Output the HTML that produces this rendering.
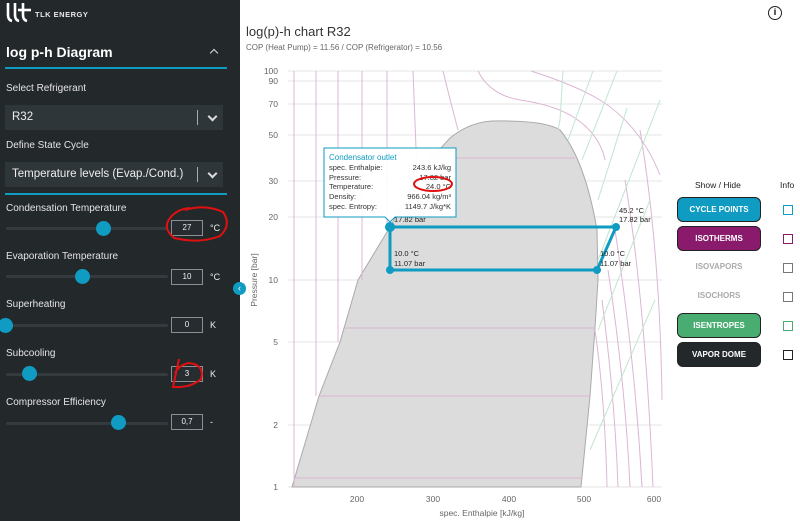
<!DOCTYPE html>
<html><head><meta charset="utf-8"><style>
*{margin:0;padding:0;box-sizing:border-box}
body{width:800px;height:521px;overflow:hidden;font-family:"Liberation Sans",sans-serif;background:#fff;position:relative}
#sb{position:absolute;left:0;top:0;width:240px;height:521px;background:#23282b;color:#e8e8e8}
.lbl{position:absolute;left:6px;font-size:10px;color:#e4e4e4}
.sel{position:absolute;left:5px;width:218px;height:25px;background:#2f3639;font-size:11.5px;color:#eee;padding:6px 7px}
.sel .bar{position:absolute;right:25px;top:5px;width:1px;height:15px;background:#aaa}
.sel .chev{position:absolute;right:7px;top:8px;width:7px;height:7px;border-right:2px solid #ddd;border-bottom:2px solid #ddd;transform:rotate(45deg)}
.track{position:absolute;left:6px;width:162px;height:3px;background:#333b3f;border-radius:2px}
.knob{position:absolute;width:15px;height:15px;border-radius:50%;background:#0f9bc2}
.box{position:absolute;left:171px;width:32px;height:16px;border:1px solid #8a9194;background:#262c2f;color:#eee;font-size:8px;text-align:center;line-height:14px}
.unit{position:absolute;left:210px;font-size:9px;color:#eee}
.btn{position:absolute;left:677px;width:84px;height:25px;border-radius:6px;font-size:8px;font-weight:bold;color:#fff;text-align:center;line-height:24px;border:1px solid #222}
.cb{position:absolute;left:783px;width:10px;height:10px;border:1.3px solid #777}
</style></head><body>
<div id="sb">
 <svg style="position:absolute;left:5px;top:1px" width="28" height="22" viewBox="0 0 28 22"><g fill="none" stroke="#fff" stroke-width="2.6"><path d="M3 2V14Q3 19 7 20"/><path d="M10 2V14Q10 19 14 20"/><path d="M18 2V14Q18 19 22 20"/><path d="M13 9H26"/></g></svg>
 <div style="position:absolute;left:35px;top:10px;font-size:7.5px;font-weight:bold;letter-spacing:.5px">TLK ENERGY</div>
 <div style="position:absolute;left:6px;top:44px;font-size:14px;font-weight:bold;color:#fff">log p-h Diagram</div>
 <div style="position:absolute;left:211px;top:50px;width:6px;height:6px;border-left:1.5px solid #ddd;border-top:1.5px solid #ddd;transform:rotate(45deg)"></div>
 <div style="position:absolute;left:5px;top:67px;width:222px;height:2px;background:#0f9bc2"></div>
 <div class="lbl" style="top:83px">Select Refrigerant</div>
 <div class="sel" style="top:105px">R32<div class="bar"></div><div class="chev"></div></div>
 <div class="lbl" style="top:140px">Define State Cycle</div>
 <div class="sel" style="top:162px">Temperature levels (Evap./Cond.)<div class="bar"></div><div class="chev"></div></div>
 <div style="position:absolute;left:5px;top:193px;width:222px;height:2px;background:#0f9bc2"></div>
 <div class="lbl" style="top:203px">Condensation Temperature</div>
 <div class="track" style="top:227px"></div><div class="knob" style="left:96px;top:221px"></div>
 <div class="box" style="top:220px">27</div><div class="unit" style="top:223px">°C</div>
 <div class="lbl" style="top:251px">Evaporation Temperature</div>
 <div class="track" style="top:275px"></div><div class="knob" style="left:75px;top:269px"></div>
 <div class="box" style="top:269px">10</div><div class="unit" style="top:272px">°C</div>
 <div class="lbl" style="top:299px">Superheating</div>
 <div class="track" style="top:324px"></div><div class="knob" style="left:-2px;top:318px"></div>
 <div class="box" style="top:317px">0</div><div class="unit" style="top:320px">K</div>
 <div class="lbl" style="top:348px">Subcooling</div>
 <div class="track" style="top:373px"></div><div class="knob" style="left:22px;top:366px"></div>
 <div class="box" style="top:366px">3</div><div class="unit" style="top:369px">K</div>
 <div class="lbl" style="top:397px">Compressor Efficiency</div>
 <div class="track" style="top:422px"></div><div class="knob" style="left:111px;top:415px"></div>
 <div class="box" style="top:414px">0,7</div><div class="unit" style="top:417px">-</div>
 <svg style="position:absolute;left:160px;top:200px" width="70" height="45"><path d="M25 10Q45 4 63 12Q72 25 60 36Q40 44 14 38Q2 28 10 18Q17 9 30 8" fill="none" stroke="#e01010" stroke-width="2"/></svg>
 <svg style="position:absolute;left:165px;top:355px" width="45" height="35"><path d="M14 4L8 32Q26 33 36 24Q40 10 24 8Q14 10 10 18" fill="none" stroke="#e01010" stroke-width="2"/></svg>
</div>
<div style="position:absolute;left:233px;top:282px;width:13px;height:13px;border-radius:50%;background:#0f9bc2;color:#fff;font-size:9px;line-height:12px;text-align:center">‹</div>
<div style="position:absolute;left:768px;top:6px;width:14px;height:14px;border:1.5px solid #222;border-radius:50%;font-size:9px;text-align:center;line-height:11px;font-weight:bold">i</div>
<div style="position:absolute;left:246px;top:24px;font-size:13px;color:#333">log(p)-h chart R32</div>
<div style="position:absolute;left:246px;top:43px;font-size:8px;color:#666">COP (Heat Pump) = 11.56 / COP (Refrigerator) = 10.56</div>
<svg style="position:absolute;left:240px;top:0" width="430" height="521" font-family="Liberation Sans" font-size="9" fill="#666">
<g transform="translate(-240,0)">
<g stroke="#e6e6e6" stroke-width="1">
<line x1="288" y1="71" x2="662" y2="71"/><line x1="288" y1="81" x2="662" y2="81"/><line x1="288" y1="104" x2="662" y2="104"/><line x1="288" y1="135" x2="662" y2="135"/><line x1="288" y1="181" x2="662" y2="181"/><line x1="288" y1="217" x2="662" y2="217"/><line x1="288" y1="280" x2="662" y2="280"/><line x1="288" y1="342" x2="662" y2="342"/><line x1="288" y1="425" x2="662" y2="425"/><line x1="288" y1="487" x2="662" y2="487"/>
</g>
<g font-size="8.5" text-anchor="end"><text x="278" y="74">100</text><text x="278" y="84">90</text><text x="278" y="107">70</text><text x="278" y="138">50</text><text x="278" y="184">30</text><text x="278" y="220">20</text><text x="278" y="283">10</text><text x="278" y="345">5</text><text x="278" y="428">2</text><text x="278" y="490">1</text></g>
<g font-size="8.5" text-anchor="middle"><text x="357" y="502">200</text><text x="433" y="502">300</text><text x="509" y="502">400</text><text x="584" y="502">500</text><text x="654" y="502">600</text></g>
<text x="482" y="516" text-anchor="middle" font-size="8.5">spec. Enthalpie [kJ/kg]</text>
<text transform="translate(257,280) rotate(-90)" text-anchor="middle" font-size="8.5">Pressure [bar]</text>
<path d="M292 487L319 396L340 342L358 280L390 227L405 200L430 160L450 138Q470 122 492 121Q545 120 560 130Q585 160 597 230L598 280L595 328L590 396L581 487Z" fill="#dcdcdc" stroke="#aaa" stroke-width="1"/>
<g stroke="#dcb6d4" stroke-width="1" fill="none">
<path d="M294 71V487M316 71V396M338 71V342M362 71V280M387 71V227M413 71L418 200"/>
<path d="M294 478H581M319 396H590M345 328H595M390 227H600M430 158H575"/>
<path d="M443 71Q450 100 458 130"/>
<path d="M478 71Q490 95 520 100Q555 105 575 118Q600 135 605 160"/>
<path d="M531 71Q575 85 600 100Q640 125 660 175"/>
<path d="M595 330Q605 400 607 487M602 300Q615 400 618 487M608 270Q625 380 630 487M615 230Q635 360 642 487M625 180Q645 300 653 487M640 130Q660 250 662 400"/>
</g>
<g stroke="#bfe6cf" stroke-width="1" fill="none">
<path d="M560 130L560 130M558 130L560 120L563 71M568 140L593 71M582 160L617 71M598 200L627 108M598 260L660 100M598 330L650 200M590 450L655 300"/>
</g>
<g stroke="#0f9bc2" stroke-width="3" fill="none"><path d="M390 227H616L597 270H390Z"/></g>
<g fill="#0f9bc2"><circle cx="390" cy="227" r="5"/><circle cx="616" cy="227" r="4"/><circle cx="597" cy="270" r="4"/><circle cx="390" cy="270" r="4"/></g>
<g font-size="7.5" fill="#222"><text x="394" y="222">17.82 bar</text><text x="619" y="213">45.2 °C</text><text x="619" y="222">17.82 bar</text><text x="394" y="256">10.0 °C</text><text x="394" y="266">11.07 bar</text><text x="600" y="256">10.0 °C</text><text x="600" y="266">11.07 bar</text></g>
<path d="M324 148H456V217H395L390 222L385 217H324Z" fill="#fff" fill-opacity="0.95" stroke="#0f9bc2" stroke-width="1"/>
<g font-size="7.5" fill="#333"><text x="329" y="160" fill="#0f9bc2" font-size="8">Condensator outlet</text>
<text x="329" y="170">spec. Enthalpie:</text><text x="329" y="180">Pressure:</text><text x="329" y="189">Temperature:</text><text x="329" y="199">Density:</text><text x="329" y="209">spec. Entropy:</text>
<g text-anchor="end"><text x="451" y="170">243.6 kJ/kg</text><text x="451" y="180">17.82 bar</text><text x="451" y="189">24.0 °C</text><text x="451" y="199">966.04 kg/m³</text><text x="451" y="209">1149.7 J/kg*K</text></g></g>
<ellipse cx="433" cy="184" rx="19" ry="7" fill="none" stroke="#e01010" stroke-width="2"/>
</g></svg>
<div style="position:absolute;left:695px;top:180px;font-size:8.5px;color:#222">Show / Hide</div>
<div style="position:absolute;left:780px;top:180px;font-size:8.5px;color:#222">Info</div>
<div class="btn" style="top:197px;background:#0f9bc2">CYCLE POINTS</div><div class="cb" style="top:205px;border-color:#0f9bc2"></div>
<div class="btn" style="top:226px;background:#8a1a6c">ISOTHERMS</div><div class="cb" style="top:234px;border-color:#8a1a6c"></div>
<div class="btn" style="top:255px;color:#aaa;border:none">ISOVAPORS</div><div class="cb" style="top:263px"></div>
<div class="btn" style="top:284px;color:#aaa;border:none">ISOCHORS</div><div class="cb" style="top:292px"></div>
<div class="btn" style="top:313px;background:#49ad72">ISENTROPES</div><div class="cb" style="top:321px;border-color:#49ad72"></div>
<div class="btn" style="top:342px;background:#23282b">VAPOR DOME</div><div class="cb" style="top:350px;border-color:#222"></div>
</body></html>
